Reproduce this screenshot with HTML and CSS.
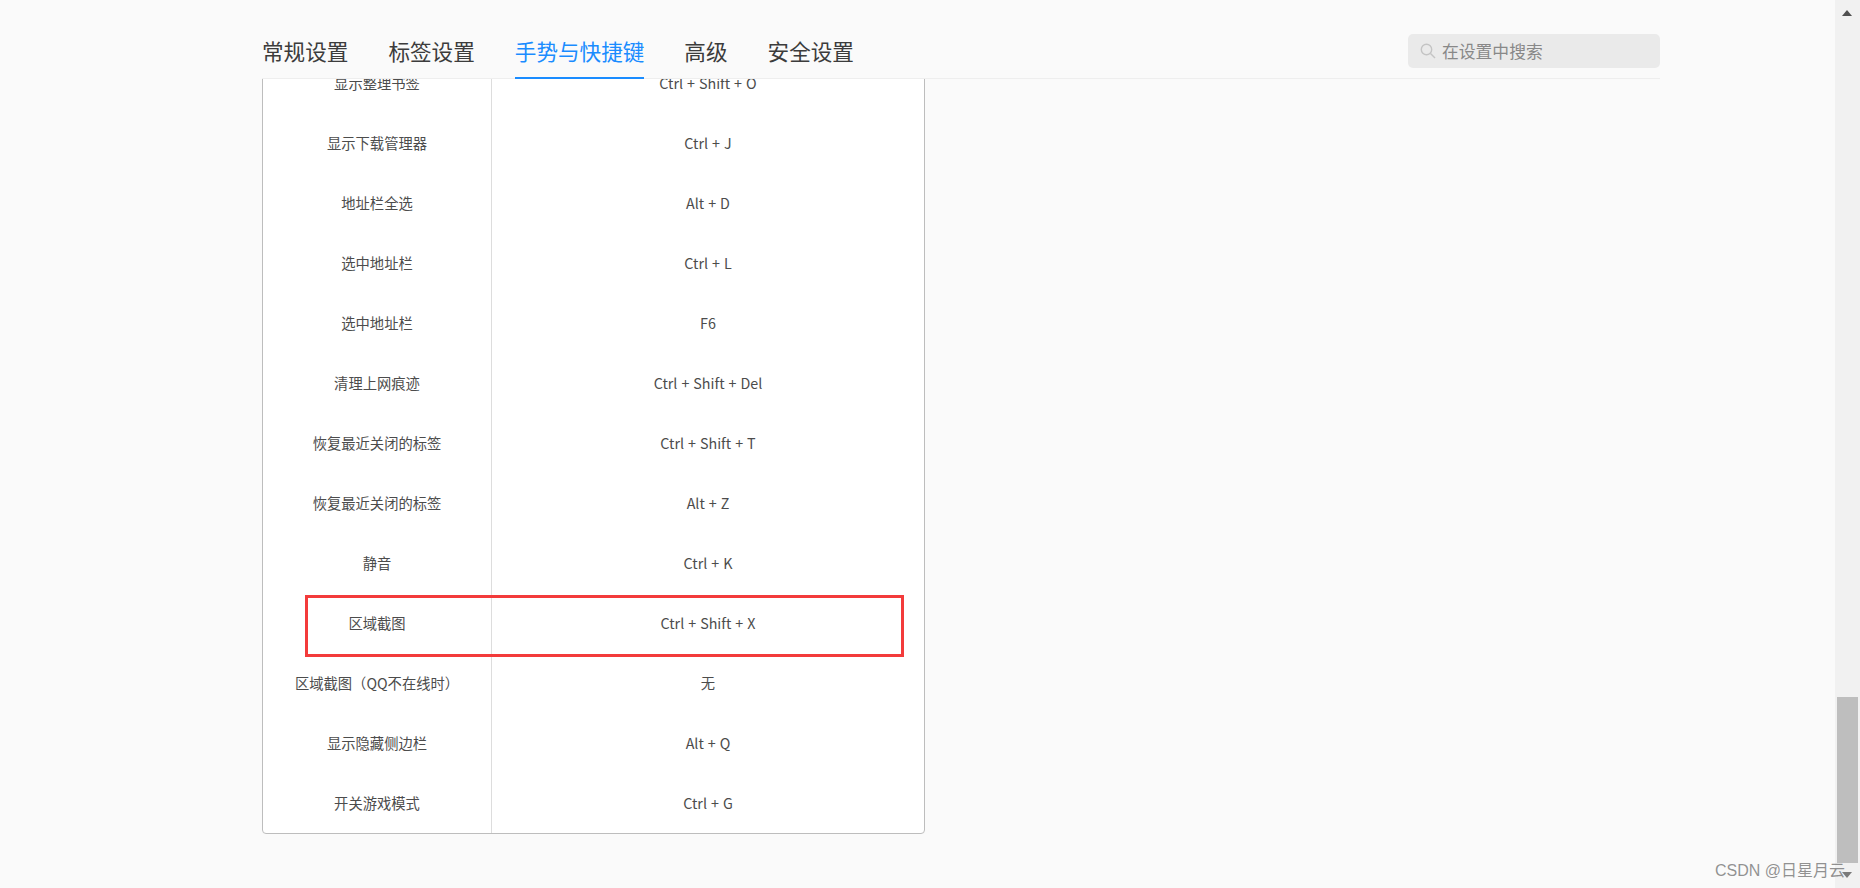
FILE: index.html
```html
<!DOCTYPE html>
<html lang="zh-CN">
<head>
    <meta charset="UTF-8">
    <title>设置 - 手势与快捷键</title>
    <link rel="stylesheet" href="styles.css">
</head>
<body>
    <div id="settings-page">
        <!-- Top tabs and search -->
        <div id="settings-header">
            <div id="tabs">
                <a class="tab">常规设置</a>
                <a class="tab">标签设置</a>
                <a class="tab active">手势与快捷键</a>
                <a class="tab">高级</a>
                <a class="tab">安全设置</a>
            </div>
            <div id="search-box">
                <svg class="search-icon" width="16" height="16" viewBox="0 0 16 16">
                    <circle cx="6.5" cy="6.5" r="5.2"></circle>
                    <path d="M10.5 10.5L15 15"></path>
                </svg>
                <span>在设置中搜索</span>
            </div>
        </div>

        <!-- Shortcut list, scrolled down -->
        <div id="settings-body">
            <div id="shortcut-table">
                <div class="row"><div class="name">显示整理书签</div><div class="keys">Ctrl + Shift + O</div></div>
                <div class="row"><div class="name">显示下载管理器</div><div class="keys">Ctrl + J</div></div>
                <div class="row"><div class="name">地址栏全选</div><div class="keys">Alt + D</div></div>
                <div class="row"><div class="name">选中地址栏</div><div class="keys">Ctrl + L</div></div>
                <div class="row"><div class="name">选中地址栏</div><div class="keys">F6</div></div>
                <div class="row"><div class="name">清理上网痕迹</div><div class="keys">Ctrl + Shift + Del</div></div>
                <div class="row"><div class="name">恢复最近关闭的标签</div><div class="keys">Ctrl + Shift + T</div></div>
                <div class="row"><div class="name">恢复最近关闭的标签</div><div class="keys">Alt + Z</div></div>
                <div class="row"><div class="name">静音</div><div class="keys">Ctrl + K</div></div>
                <div class="row"><div class="name">区域截图</div><div class="keys">Ctrl + Shift + X</div></div>
                <div class="row"><div class="name">区域截图（QQ不在线时）</div><div class="keys">无</div></div>
                <div class="row"><div class="name">显示隐藏侧边栏</div><div class="keys">Alt + Q</div></div>
                <div class="row"><div class="name">开关游戏模式</div><div class="keys">Ctrl + G</div></div>
                <div id="red-mark"></div>
            </div>
        </div>
    </div>

    <!-- Fake scrollbar -->
    <div id="scrollbar">
        <div class="arrow up"></div>
        <div id="thumb"></div>
        <div class="arrow down"></div>
    </div>

    <div id="watermark">CSDN @日星月云</div>
</body>
</html>
```

FILE: styles.css
```css
* {
    box-sizing: border-box;
    margin: 0;
    padding: 0;
}

body {
    display: flex;
    height: 100vh;
    overflow: hidden;
    background-color: #fafafa;
    color: #333;
    font-family: "Noto Sans CJK SC", "Noto Sans", sans-serif;
}

#settings-page {
    flex: 1;
    display: flex;
    flex-direction: column;
    padding: 0 175px 0 262px;
    min-width: 0;
}

/* Tabs and search */
#settings-header {
    height: 79px;
    flex: none;
    display: flex;
    justify-content: space-between;
    border-bottom: 1px solid #eeeeee;
}

#tabs {
    display: flex;
    gap: 40px;
}

.tab {
    height: 79px;
    padding-top: 35px;
    font-size: 21.6px;
    line-height: 31px;
    color: #3c3c3c;
}

.tab.active {
    color: #1a8cff;
    border-bottom: 2px solid #1a8cff;
}

#search-box {
    width: 252px;
    height: 34px;
    margin-top: 34px;
    padding-left: 12px;
    display: flex;
    align-items: center;
    gap: 6px;
    background-color: #eaeaea;
    border-radius: 5px;
    font-size: 16.8px;
    color: #888;
}

.search-icon {
    fill: none;
    stroke: #c4c4c4;
    stroke-width: 1.4;
}

/* Shortcut table */
#settings-body {
    flex: 1;
    overflow: hidden;
}

#shortcut-table {
    position: relative;
    width: 663px;
    margin-top: -27px;
    background-color: #fff;
    border: 1px solid #bdbdbd;
    border-radius: 4px;
    font-size: 14.3px;
    color: #4c4c4c;
}

.row {
    display: flex;
    height: 60px;
    line-height: 60px;
    text-align: center;
}

.name {
    width: 229px;
    border-right: 1px solid #dddddd;
}

.keys {
    flex: 1;
    word-spacing: 0.8px;
}

/* Red box drawn over the screenshot */
#red-mark {
    position: absolute;
    left: 42px;
    top: 542px;
    width: 599px;
    height: 62px;
    border: 3px solid #f33b3b;
}

/* Scrollbar */
#scrollbar {
    position: relative;
    width: 25px;
    flex: none;
    background-color: #f1f1f1;
}

#thumb {
    position: absolute;
    left: 2px;
    top: 697px;
    width: 21px;
    height: 166px;
    background-color: #bebebe;
}

.arrow {
    position: absolute;
    left: 7px;
    width: 0;
    height: 0;
    border-left: 5.5px solid transparent;
    border-right: 5.5px solid transparent;
}

.arrow.up {
    top: 10px;
    border-bottom: 6px solid #505050;
}

.arrow.down {
    top: 872px;
    border-top: 6px solid #7a7a7a;
}

#watermark {
    position: absolute;
    right: 15px;
    bottom: 5px;
    font-family: "Liberation Sans", "Noto Sans CJK SC", sans-serif;
    font-size: 16px;
    line-height: 24px;
    color: rgba(110, 110, 110, 0.75);
}
```
